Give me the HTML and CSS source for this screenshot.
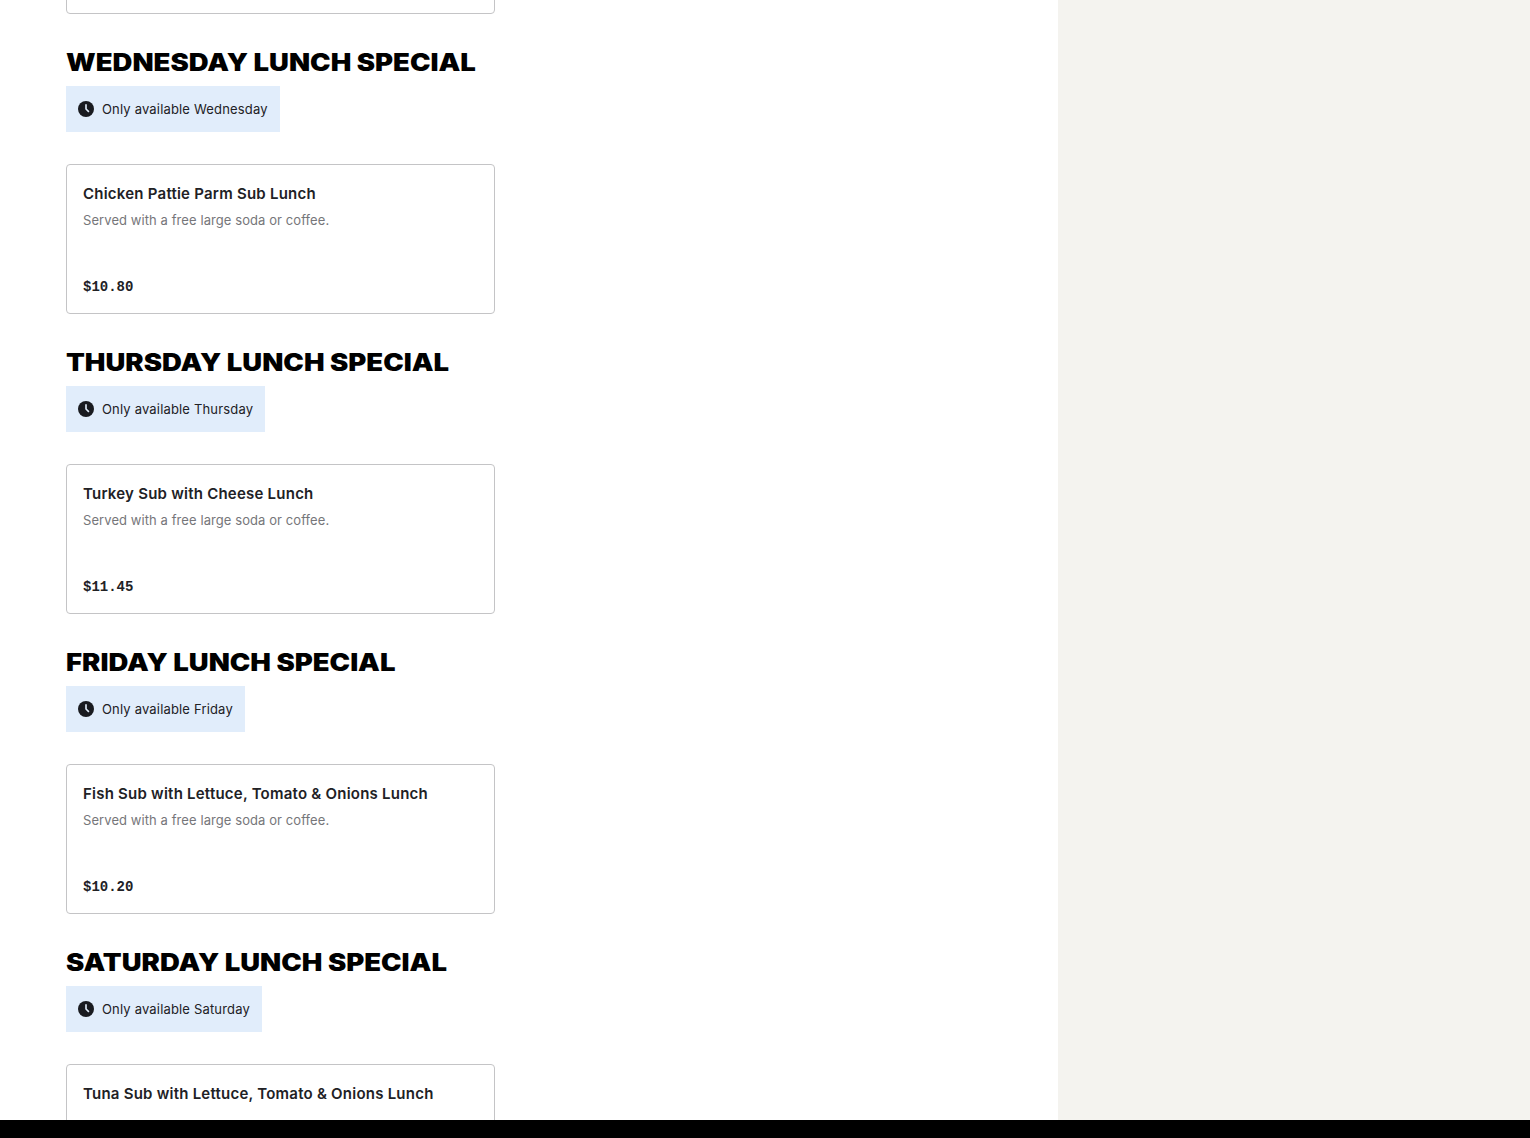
FILE: index.html
```html
<!DOCTYPE html>
<html lang="en">
<head>
  <meta charset="UTF-8">
  <meta name="viewport" content="width=device-width, initial-scale=1.0">
  <title>Menu - Lunch Specials</title>
  <link rel="stylesheet" href="styles.css">
</head>
<body>
  <!-- shared clock icon -->
  <svg class="sprite" aria-hidden="true">
    <symbol id="clock" viewBox="0 0 16 16">
      <circle cx="8" cy="8" r="8" fill="#191b20"/>
      <path d="M8 3.2V8l2.9 2.9" fill="none" stroke="#e1edfb" stroke-width="1.6"/>
    </symbol>
  </svg>

  <div class="page">
    <main class="menu">
      <article class="item item-first"></article>

      <section class="menu-section">
        <h2>Wednesday Lunch Special</h2>
        <div class="notice">
          <svg class="icon"><use href="#clock"/></svg>
          <span>Only available Wednesday</span>
        </div>
        <article class="item">
          <h3>Chicken Pattie Parm Sub Lunch</h3>
          <p>Served with a free large soda or coffee.</p>
          <div class="price">$10.80</div>
        </article>
      </section>

      <section class="menu-section">
        <h2>Thursday Lunch Special</h2>
        <div class="notice">
          <svg class="icon"><use href="#clock"/></svg>
          <span>Only available Thursday</span>
        </div>
        <article class="item">
          <h3>Turkey Sub with Cheese Lunch</h3>
          <p>Served with a free large soda or coffee.</p>
          <div class="price">$11.45</div>
        </article>
      </section>

      <section class="menu-section">
        <h2>Friday Lunch Special</h2>
        <div class="notice">
          <svg class="icon"><use href="#clock"/></svg>
          <span>Only available Friday</span>
        </div>
        <article class="item">
          <h3>Fish Sub with Lettuce, Tomato &amp; Onions Lunch</h3>
          <p>Served with a free large soda or coffee.</p>
          <div class="price">$10.20</div>
        </article>
      </section>

      <section class="menu-section">
        <h2>Saturday Lunch Special</h2>
        <div class="notice">
          <svg class="icon"><use href="#clock"/></svg>
          <span>Only available Saturday</span>
        </div>
        <article class="item">
          <h3>Tuna Sub with Lettuce, Tomato &amp; Onions Lunch</h3>
        </article>
      </section>
    </main>
    <aside class="sidebar"></aside>
  </div>
  <footer class="footer"></footer>
</body>
</html>
```
FILE: styles.css
```css
* {
  box-sizing: border-box;
}
html, body {
  margin: 0;
  padding: 0;
}
body {
  height: 100vh;
  display: flex;
  flex-direction: column;
  overflow: hidden;
  font-family: Inter, "Liberation Sans", sans-serif;
  color: #212125;
  background: #fff;
}
.sprite {
  display: none;
}
.page {
  flex: 1;
  min-height: 0;
  display: flex;
  overflow: hidden;
}
.menu {
  flex: 1;
  padding-left: 66px;
}
.sidebar {
  width: 472px;
  background: #f4f3ef;
}
.menu-section {
  height: 300px;
  padding-top: 32px;
}
/* wide display heading */
.menu-section h2 {
  width: 429px;
  margin: 0 0 6px;
  font-size: 24px;
  line-height: 34px;
  font-weight: 900;
  text-transform: uppercase;
  white-space: nowrap;
  color: #000;
  transform: scaleX(1.145);
  transform-origin: left;
}
.notice {
  display: inline-flex;
  align-items: center;
  gap: 8px;
  height: 46px;
  padding: 0 12px;
  background: #e1edfb;
  font-size: 13px;
  letter-spacing: 0.17px;
}
.notice .icon {
  width: 16px;
  height: 16px;
}
.item {
  display: flex;
  flex-direction: column;
  width: 429px;
  height: 150px;
  margin-top: 32px;
  padding: 16px;
  border: 1px solid #c4c4c6;
  border-radius: 4px;
}
/* only the bottom edge of the previous card is in view */
.item-first {
  margin-top: -136px;
}
.item h3 {
  margin: 0;
  font-size: 15px;
  line-height: 26px;
  font-weight: 600;
  letter-spacing: 0.23px;
}
.item p {
  margin: 2px 0 0;
  font-size: 13px;
  line-height: 22px;
  letter-spacing: 0.08px;
  color: #76767a;
}
.price {
  margin-top: auto;
  font-family: "Liberation Mono", monospace;
  font-size: 14px;
  line-height: 20px;
  font-weight: 700;
}
.footer {
  flex: none;
  height: 18px;
  background: #000;
}
```
